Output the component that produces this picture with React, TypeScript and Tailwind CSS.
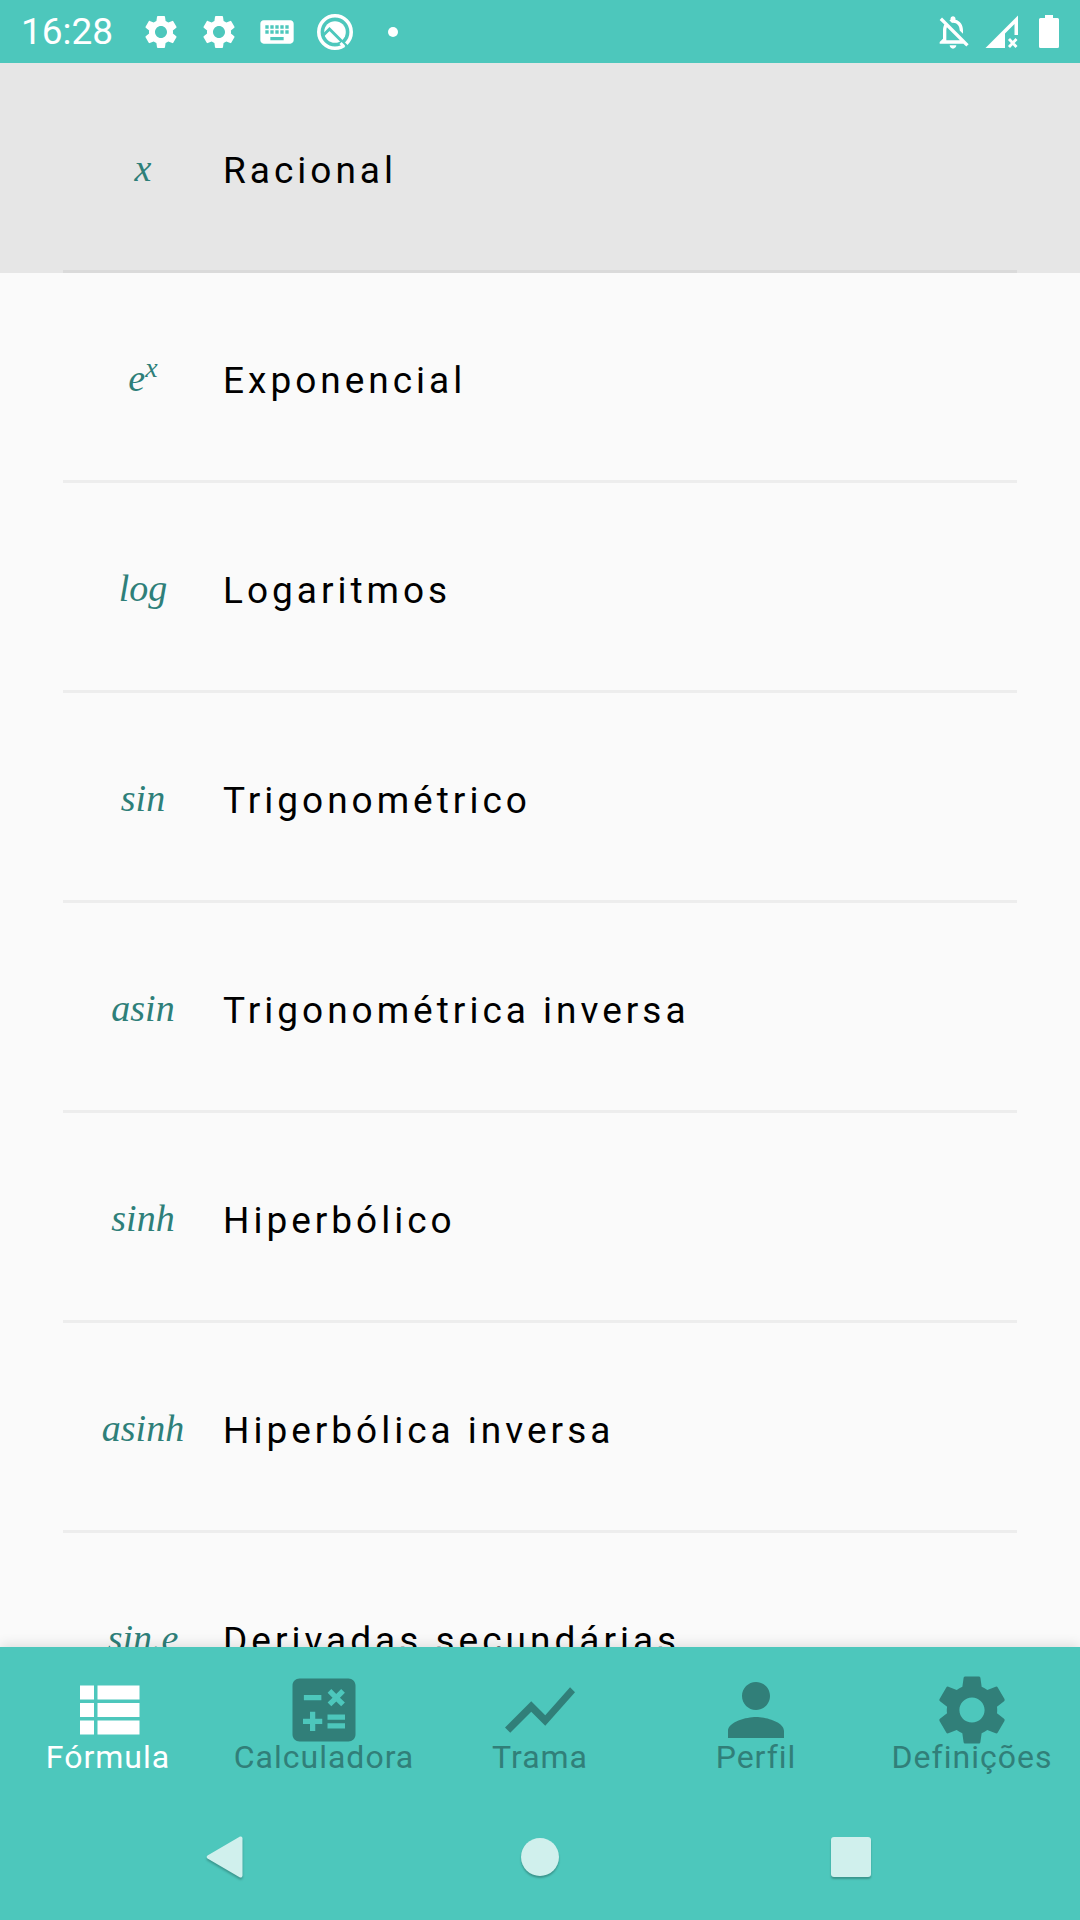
import type { ReactNode } from "react";
import {
  MdCalculate,
  MdKeyboard,
  MdOutlineNotificationsOff,
  MdPerson,
  MdSettings,
  MdShowChart,
} from "react-icons/md";

type Row = { symbol: ReactNode; label: string; active?: boolean };

const rows: Row[] = [
  { symbol: "x", label: "Racional", active: true },
  {
    symbol: (
      <>
        e<sup className="text-[28px]">x</sup>
      </>
    ),
    label: "Exponencial",
  },
  { symbol: "log", label: "Logaritmos" },
  { symbol: "sin", label: "Trigonométrico" },
  { symbol: "asin", label: "Trigonométrica inversa" },
  { symbol: "sinh", label: "Hiperbólico" },
  { symbol: "asinh", label: "Hiperbólica inversa" },
  { symbol: "sin.e", label: "Derivadas secundárias" },
];

function ListIcon() {
  return (
    <svg viewBox="0 0 24 24" className="size-[84px]" fill="currentColor" aria-hidden="true">
      <path d="M4 14h4v-4H4v4zm0 5h4v-4H4v4zM4 9h4V5H4v4zm5 5h12v-4H9v4zm0 5h12v-4H9v4zM9 5v4h12V5H9z" />
    </svg>
  );
}

function BadgeIcon() {
  return (
    <svg viewBox="0 0 40 40" className="size-10" fill="none" aria-hidden="true">
      <circle cx="20" cy="20" r="16.2" stroke="white" strokeWidth="3.6" />
      <circle cx="20" cy="20" r="10.8" fill="white" />
      <path d="M7.5 24 14.5 17 33 35.5" stroke="#4dc7bc" strokeWidth="3" />
      <path d="M25.500 31 29 34.500" stroke="white" strokeWidth="3" />
    </svg>
  );
}

function SignalIcon() {
  return (
    <svg viewBox="0 0 40 40" className="size-10" aria-hidden="true">
      <path d="M37 3.500V23h-3.500V12L24 21.500V36H4.500Z" fill="white" />
      <path d="M28 27l7.500 8M35.500 27L28 35" stroke="white" strokeWidth="2.800" />
    </svg>
  );
}

function BatteryIcon() {
  return (
    <svg viewBox="0 0 40 40" className="size-10" fill="white" aria-hidden="true">
      <path d="M16 3h8v3h4.500A1.500 1.500 0 0 1 30 7.500v27a1.500 1.500 0 0 1-1.500 1.500h-17a1.500 1.500 0 0 1-1.500-1.500v-27A1.500 1.500 0 0 1 11.500 6H16Z" />
    </svg>
  );
}

const tabs = [
  { label: "Fórmula", icon: <ListIcon />, active: true },
  { label: "Calculadora", icon: <MdCalculate className="size-[84px]" /> },
  { label: "Trama", icon: <MdShowChart className="size-[84px]" /> },
  { label: "Perfil", icon: <MdPerson className="size-[84px]" /> },
  { label: "Definições", icon: <MdSettings className="size-[84px]" /> },
];

function StatusBar() {
  return (
    <header className="flex h-[63px] shrink-0 items-center justify-between bg-[#4dc7bc] pr-[11px] pl-[21px] text-white">
      <div className="flex items-center gap-[18px]">
        <time className="mr-2.5 text-[37px] leading-none">16:28</time>
        <MdSettings className="size-10" />
        <MdSettings className="size-10" />
        <MdKeyboard className="size-10" />
        <BadgeIcon />
        <span className="mx-[15px] size-2.5 rounded-full bg-white" />
      </div>
      <div className="flex items-center gap-2">
        <MdOutlineNotificationsOff className="size-10" />
        <SignalIcon />
        <BatteryIcon />
      </div>
    </header>
  );
}

function FormulaRow({ symbol, label, active }: Row) {
  return (
    <li>
      <button
        type="button"
        className={
          active ? "block w-full bg-[#e6e6e6] px-[63px] text-left" : "block w-full px-[63px] text-left"
        }
      >
        <span
          className={
            active
              ? "flex h-[210px] items-center border-b-3 border-[#dadada] pt-2"
              : "flex h-[210px] items-center border-b-3 border-[#ededed] pt-2"
          }
        >
          <span className="w-40 pb-1.5 text-center font-['Liberation_Serif',serif] text-[38px] leading-none text-[#2e7f79] italic">
            {symbol}
          </span>
          <span className="text-[37px] leading-none tracking-[4px] text-black">{label}</span>
        </span>
      </button>
    </li>
  );
}

export default function App() {
  return (
    <div className="flex h-dvh flex-col overflow-hidden bg-[#fafafa] font-[Roboto,sans-serif]">
      <StatusBar />
      <main className="min-h-0 flex-1 overflow-hidden">
        <ul>
          {rows.map((row) => (
            <FormulaRow key={row.label} {...row} />
          ))}
        </ul>
      </main>
      <footer className="shrink-0 bg-[#4dc7bc] shadow-[0_-2px_12px_rgba(0,0,0,0.12)]">
        <nav className="grid h-[147px] grid-cols-5">
          {tabs.map((tab) => (
            <button
              key={tab.label}
              type="button"
              className={
                tab.active
                  ? "flex flex-col items-center pt-[21px] text-white"
                  : "flex flex-col items-center pt-[21px] text-[#317f79]"
              }
            >
              {tab.icon}
              <span className="-mt-[11px] text-[32px] leading-8 tracking-[1px]">{tab.label}</span>
            </button>
          ))}
        </nav>
        <div className="flex h-[126px] items-center px-[73px]">
          <button type="button" aria-label="Voltar" className="flex flex-1 justify-center">
            <svg viewBox="0 0 48 48" className="size-12 drop-shadow-[0_2px_1px_rgba(0,0,0,0.25)]" aria-hidden="true">
              <path d="M2.500 22.500 35 3.500a2 2 0 0 1 2.500 2v37a2 2 0 0 1-2.500 2L2.500 25.500a2 2 0 0 1 0-3Z" fill="#d0f0ed" />
            </svg>
          </button>
          <button type="button" aria-label="Início" className="flex flex-1 justify-center">
            <span className="size-[38px] rounded-full bg-[#d0f0ed] shadow-[0_2px_2px_rgba(0,0,0,0.25)]" />
          </button>
          <button type="button" aria-label="Recentes" className="flex flex-1 justify-center">
            <span className="size-10 rounded-[3px] bg-[#d0f0ed] shadow-[0_2px_2px_rgba(0,0,0,0.25)]" />
          </button>
        </div>
      </footer>
    </div>
  );
}
